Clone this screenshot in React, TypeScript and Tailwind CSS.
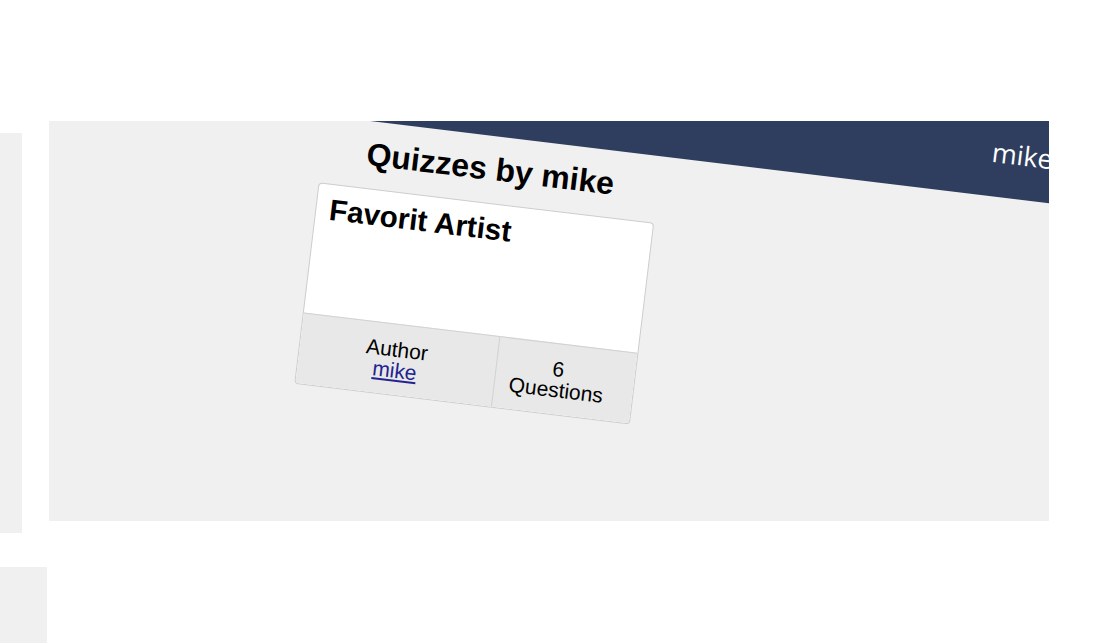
const QuizCard = ({ title, author, questions }: { title: string; author: string; questions: number }) => {
  return (
    <div className="mt-[15px] h-[203px] flex flex-col rounded-[4px] border border-[#cdcdcd] bg-white overflow-hidden">
      <div className="flex-1 pt-[8px] pl-[13px]">
        <h2 className="text-[29.6px] leading-[34px] font-bold text-black">{title}</h2>
      </div>
      <div className="h-[71px] flex border-t border-[#d2d2d2] bg-[#e8e8e8] text-[21px] leading-[21.5px] text-black">
        <div className="w-[197px] flex flex-col items-center justify-center pr-[3px]">
          <span>Author</span>
          <a href="#" className="text-[#23238f] underline">{author}</a>
        </div>
        <div className="flex-1 flex flex-col items-center justify-center border-l border-[#d2d2d2] pr-[15px]">
          <span>{questions}</span>
          <span>Questions</span>
        </div>
      </div>
    </div>
  );
};

const App = () => {
  return (
    <div className="w-[1099px] h-[643px] bg-white overflow-hidden font-['Liberation_Sans',Arial,sans-serif]">
      <div className="pt-[121px] flex items-start gap-[27px]">
        <div className="mt-[12px] w-[22px] h-[400px] bg-[#f0f0f0]" />
        <div className="w-[1000px] h-[400px] bg-[#f0f0f0] overflow-hidden">
          <div className="w-[1000px] h-[400px] rotate-[6.9deg]">
            <div className="-mt-[128px] -mx-[200px] h-[150px] px-[200px] flex items-end bg-[#2f3e5e]">
              <span className="ml-[935px] pb-[26px] text-[27px] leading-[37px] text-white font-['Open_Sans',sans-serif]">
                mike
              </span>
            </div>
            <div className="ml-[270px] w-[338px]">
              <h1 className="mt-[15px] text-center text-[32px] leading-[37px] font-bold text-black">Quizzes by mike</h1>
              <QuizCard title="Favorit Artist" author="mike" questions={6} />
            </div>
          </div>
        </div>
      </div>
      <div className="mt-[34px] w-[47px] h-[100px] bg-[#f0f0f0]" />
    </div>
  );
};

export default App;
